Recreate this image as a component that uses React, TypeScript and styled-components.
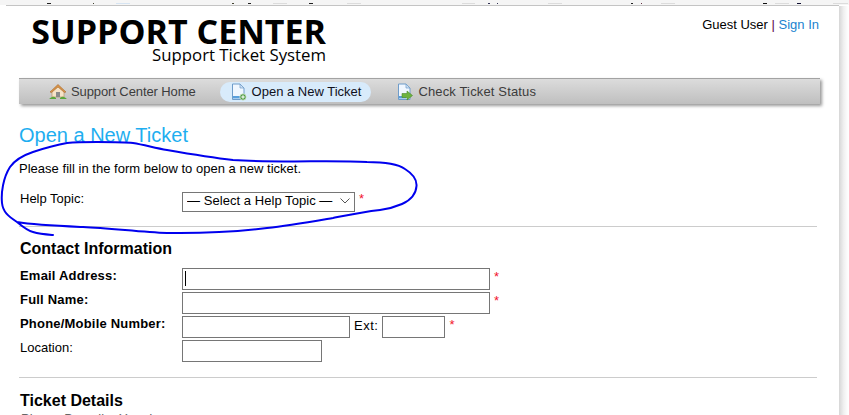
import React from "react";
import styled, { createGlobalStyle } from "styled-components";

const Global = createGlobalStyle`
  html, body { margin: 0; padding: 0; width: 849px; height: 415px; overflow: hidden; background: #fff; }
  body { font-family: "Liberation Sans", Arial, sans-serif; color: #000; }
  #root { height: 415px; }
`;

const Viewport = styled.div`
  position: relative;
  width: 849px;
  height: 415px;
  overflow: hidden;
  display: flex;
  flex-direction: column;
`;

const Strip = styled.div`
  height: 5px;
  flex: none;
  background: #f5f5f5;
  line-height: 0;
`;

const Frame = styled.div`
  display: flex;
  flex: 1;
  min-height: 0;
`;

const Sheet = styled.div`
  width: 833px;
  margin-left: 6px;
  flex: none;
  border-top: 1px solid #c4c4c4;
`;

const Shade = styled.div`
  width: 10px;
  flex: none;
  margin-top: 1px;
  background: linear-gradient(to right, #d6d6d6, #efefef 45%, #fbfbfb 80%, #fff);
`;

const Content = styled.div`
  margin-left: 13px;
  width: 801px;
`;

const Header = styled.header`
  display: flex;
  justify-content: space-between;
  height: 72px;
`;

const Logo = styled.div`
  margin-left: 13px;
  width: 294px;
  display: flex;
  flex-direction: column;
  align-items: flex-end;
  font-family: "Open Sans", sans-serif;
  color: #000;
`;

const LogoTitle = styled.div`
  font-size: 34px;
  font-weight: 700;
  line-height: 28px;
  margin-top: 11px;
  white-space: nowrap;
`;

const LogoSub = styled.div`
  font-size: 16.8px;
  line-height: 20px;
  white-space: nowrap;
`;

const UserInfo = styled.div`
  font-size: 13px;
  line-height: 15px;
  margin-top: 11px;
  margin-right: 1px;
  white-space: nowrap;
`;

const Sep = styled.span`
  color: #5a0a4a;
`;

const SignIn = styled.a`
  color: #1b83cf;
`;

const Nav = styled.nav`
  height: 25px;
  display: flex;
  align-items: center;
  border-top: 1px solid #a3a3a3;
  background: linear-gradient(to bottom, #dcdcdc, #bfbfbf);
  box-shadow: 2px 2px 3px #999;
`;

const NavItem = styled.a<{ $active?: boolean; $gap: number; $track?: number }>`
  display: flex;
  align-items: center;
  gap: 4px;
  height: 20px;
  margin-left: ${(p) => p.$gap}px;
  padding: 0 10px;
  border-radius: 10px;
  font-size: 13px;
  letter-spacing: ${(p) => p.$track ?? 0}px;
  white-space: nowrap;
  color: ${(p) => (p.$active ? "#10101c" : "#3c3c3c")};
  background: ${(p) => (p.$active ? "#d8ebfb" : "transparent")};
`;

const PageTitle = styled.h1`
  margin: 19px 0 0;
  font-size: 20px;
  line-height: 24px;
  font-weight: 400;
  color: #1eaef0;
`;

const Intro = styled.p`
  margin: 15px 0 0;
  font-size: 13px;
  line-height: 14px;
  letter-spacing: 0.02px;
  white-space: nowrap;
`;

const TopicRow = styled.div`
  display: flex;
  margin-top: 15px;
  height: 20px;
`;

const Label = styled.label<{ $bold?: boolean }>`
  width: 163px;
  flex: none;
  padding-left: 1px;
  box-sizing: border-box;
  font-size: 13px;
  line-height: 15px;
  font-weight: ${(p) => (p.$bold ? 700 : 400)};
  letter-spacing: ${(p) => (p.$bold ? "0.2px" : "0")};
  white-space: nowrap;
`;

const SelectWrap = styled.div`
  position: relative;
  width: 173px;
  height: 20px;
`;

const Select = styled.select`
  appearance: none;
  width: 100%;
  height: 100%;
  box-sizing: border-box;
  border: 1px solid #767676;
  border-radius: 0;
  background: #fff;
  padding: 0 0 2px 4px;
  font-family: "Liberation Sans", Arial, sans-serif;
  font-size: 13px;
  letter-spacing: 0.05px;
  color: #000;
`;

const Chevron = styled.svg`
  position: absolute;
  right: 5px;
  top: 7px;
  width: 10px;
  height: 6px;
`;

const Star = styled.span<{ $top: number }>`
  margin: ${(p) => p.$top}px 0 0 4px;
  font-size: 13px;
  line-height: 14px;
  color: #f2142c;
`;

const Divider = styled.hr`
  border: 0;
  height: 1px;
  background: #cccccc;
  margin: 0 3px 0 0;
`;

const SectionTitle = styled.h2`
  margin: 0;
  padding-left: 1px;
  font-size: 16px;
  line-height: 18px;
  font-weight: 700;
`;

const Fields = styled.div`
  display: flex;
  flex-direction: column;
  gap: 2px;
  margin-top: 10px;
`;

const Row = styled.div`
  display: flex;
  height: 22px;
`;

const InputWrap = styled.div`
  position: relative;
  display: flex;
`;

const TextInput = styled.input<{ $w: number }>`
  width: ${(p) => p.$w}px;
  height: 22px;
  box-sizing: border-box;
  border: 1px solid #767676;
  border-radius: 0;
  background: #fff;
  padding: 0;
  margin: 0;
`;

const Caret = styled.span`
  position: absolute;
  left: 3px;
  top: 3px;
  width: 1px;
  height: 15px;
  background: #000;
`;

const Ext = styled.span`
  margin: 3px 4px 0 4px;
  font-size: 13px;
  line-height: 14px;
  letter-spacing: 0.5px;
`;

const Hint = styled.div`
  margin: 2px 0 0 2px;
  font-size: 13px;
  line-height: 14px;
  color: #666;
  white-space: nowrap;
`;

const Scribble = styled.svg`
  position: absolute;
  left: 0;
  top: 0;
  width: 849px;
  height: 415px;
  pointer-events: none;
`;

const HouseIcon = () => (
  <svg width="18" height="17" viewBox="0 0 18 17">
    <path d="M3 8 L3 14 L15 14 L15 8 L9 3 Z" fill="#f5e3c8" stroke="#b58a58" strokeWidth="0.6" />
    <path d="M1 9 L9 1.5 L17 9 L15.5 9.5 L9 4 L2.5 9.5 Z" fill="#d8954a" stroke="#a9682c" strokeWidth="0.6" />
    <rect x="7" y="9" width="4" height="5" fill="#8a8a8a" />
    <path d="M0.5 15.5 Q4 12.5 7 15 L7 16 L0.5 16 Z M11 15 Q14 12.5 17.5 15.5 L17.5 16 L11 16 Z" fill="#5aa63c" />
  </svg>
);

const DocBase = () => (
  <>
    <path d="M2.5 1 L10 1 L14 5 L14 16.5 L2.5 16.5 Z" fill="#f0f7ff" stroke="#6f9cc9" strokeWidth="1" />
    <path d="M10 1 L10 5 L14 5 Z" fill="#cfe1f4" stroke="#6f9cc9" strokeWidth="0.7" />
    <rect x="3" y="13" width="7" height="2.5" fill="#5aa0dc" />
  </>
);

const NewDocIcon = () => (
  <svg width="18" height="18" viewBox="0 0 18 18">
    <DocBase />
    <circle cx="13" cy="14" r="3.2" fill="#4f9b45" stroke="#e8f2e4" strokeWidth="0.7" />
    <path d="M13 12.2 V15.8 M11.2 14 H14.8" stroke="#fff" strokeWidth="1.1" />
  </svg>
);

const StatusDocIcon = () => (
  <svg width="18" height="18" viewBox="0 0 18 18">
    <DocBase />
    <path d="M6 10.5 H11 V8 L16.5 12.5 L11 17 V14.5 H6 Z" fill="#6db33f" stroke="#4c8a2a" strokeWidth="0.6" />
  </svg>
);

const marks: [number, number, string][] = [
  [47, 4, "#222"], [93, 1, "#443"], [116, 14, "#d6e4f2"], [232, 2, "#443"], [248, 3, "#222"],
  [273, 14, "#dcdcdc"], [309, 4, "#222"], [347, 14, "#dcdcdc"], [462, 13, "#dcdcdc"],
  [488, 2, "#335"], [497, 1, "#335"], [548, 14, "#dcdcdc"], [631, 2, "#222"], [641, 1, "#634"],
  [661, 14, "#dcdcdc"], [763, 4, "#111"], [775, 14, "#dcdcdc"], [797, 4, "#113"], [833, 15, "#dcdcdc"],
];

export default function App() {
  return (
    <Viewport>
      <Global />
      <Strip>
        <svg width="849" height="2" viewBox="0 0 849 2">
          {marks.map(([x, w, c]) => (
            <rect key={x} x={x} y={0} width={w} height={1} fill={c} />
          ))}
        </svg>
      </Strip>
      <Frame>
        <Sheet>
          <Content>
            <Header>
              <Logo>
                <LogoTitle>SUPPORT CENTER</LogoTitle>
                <LogoSub>Support Ticket System</LogoSub>
              </Logo>
              <UserInfo>
                Guest User <Sep>|</Sep> <SignIn>Sign In</SignIn>
              </UserInfo>
            </Header>
            <Nav>
              <NavItem $gap={20} $track={-0.1}><HouseIcon />Support Center Home</NavItem>
              <NavItem $gap={14} $active><NewDocIcon />Open a New Ticket</NavItem>
              <NavItem $gap={15} $track={0.15}><StatusDocIcon />Check Ticket Status</NavItem>
            </Nav>
            <PageTitle>Open a New Ticket</PageTitle>
            <Intro>Please fill in the form below to open a new ticket.</Intro>
            <TopicRow>
              <Label>Help Topic:</Label>
              <SelectWrap>
                <Select defaultValue="">
                  <option value="">— Select a Help Topic —</option>
                </Select>
                <Chevron viewBox="0 0 10 6">
                  <path d="M0.5 0.5 L5 5 L9.5 0.5" fill="none" stroke="#555" strokeWidth="1" />
                </Chevron>
              </SelectWrap>
              <Star $top={1}>*</Star>
            </TopicRow>
            <Divider style={{ marginTop: 15 }} />
            <SectionTitle style={{ marginTop: 13 }}>Contact Information</SectionTitle>
            <Fields>
              <Row>
                <Label $bold>Email Address:</Label>
                <InputWrap>
                  <TextInput $w={308} />
                  <Caret />
                </InputWrap>
                <Star $top={2}>*</Star>
              </Row>
              <Row>
                <Label $bold>Full Name:</Label>
                <TextInput $w={308} />
                <Star $top={2}>*</Star>
              </Row>
              <Row>
                <Label $bold>Phone/Mobile Number:</Label>
                <TextInput $w={168} />
                <Ext>Ext:</Ext>
                <TextInput $w={63} />
                <Star $top={2}>*</Star>
              </Row>
              <Row>
                <Label>Location:</Label>
                <TextInput $w={140} />
              </Row>
            </Fields>
            <Divider style={{ marginTop: 15 }} />
            <SectionTitle style={{ marginTop: 14 }}>Ticket Details</SectionTitle>
            <Hint>Please Describe Your Issue</Hint>
          </Content>
        </Sheet>
        <Shade />
      </Frame>
      <Scribble viewBox="0 0 849 415">
        <path
          d="M97 142 C110 142 125 142 133 143 C145 145 155 148 167 150 C190 154 215 158 233 160 C280 163 330 160 367 162 C385 162 398 164 405 169 C413 174 417 180 416.5 186 C416 194 411 200 402 204 C395 207 388 209 380 210 C362 212 348 215 333 218 C310 222 288 226 267 228 C235 232 200 233.5 167 233 C140 232 110 228 83 227 C60 226 35 225 17 222 C8 216 3 212 2 203 C1 193 3 178 10 167 C15 160 24 155 33 152 C45 148 55 145 67 143 C77 142 87 142 97 142 Z M17 222 C23 227 28 231 33 232 C40 234 47 234.5 53 235"
          fill="none"
          stroke="#0000ee"
          strokeWidth="2"
          strokeLinecap="round"
        />
      </Scribble>
    </Viewport>
  );
}
